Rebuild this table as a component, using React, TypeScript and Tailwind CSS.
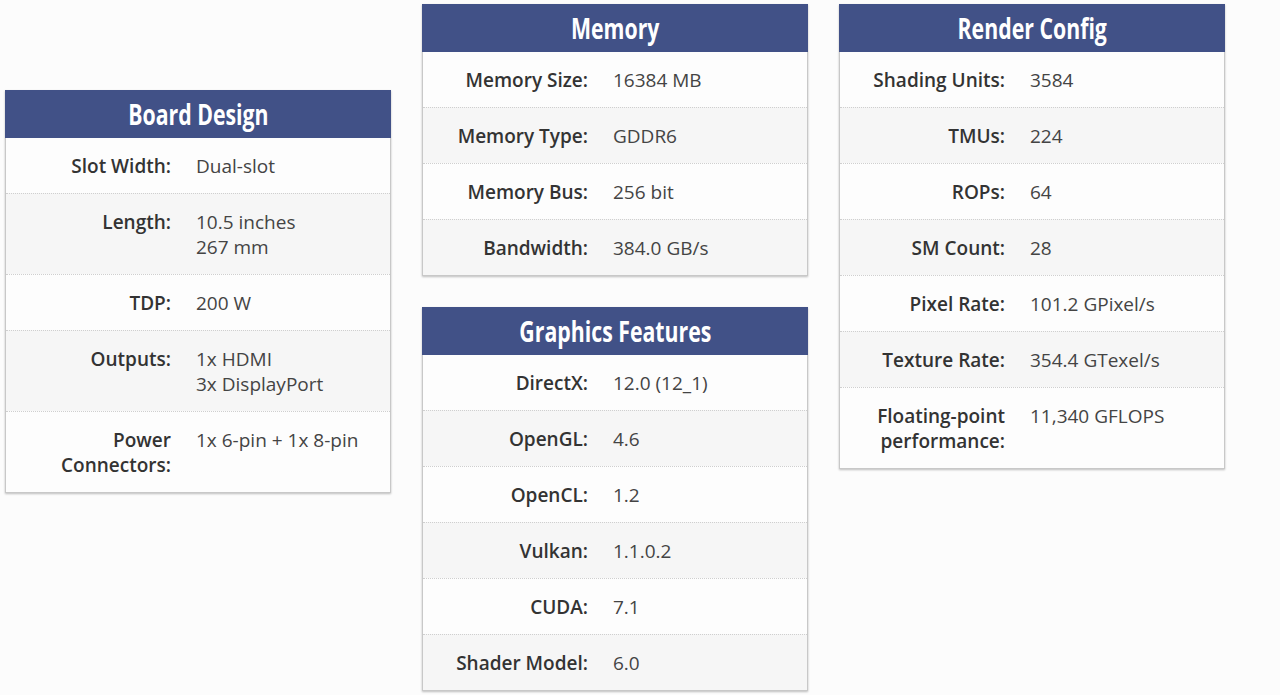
type Row = { label: string[]; value: string[] };

const boardDesign: Row[] = [
  { label: ["Slot Width:"], value: ["Dual-slot"] },
  { label: ["Length:"], value: ["10.5 inches", "267 mm"] },
  { label: ["TDP:"], value: ["200 W"] },
  { label: ["Outputs:"], value: ["1x HDMI", "3x DisplayPort"] },
  { label: ["Power", "Connectors:"], value: ["1x 6-pin + 1x 8-pin"] },
];

const memory: Row[] = [
  { label: ["Memory Size:"], value: ["16384 MB"] },
  { label: ["Memory Type:"], value: ["GDDR6"] },
  { label: ["Memory Bus:"], value: ["256 bit"] },
  { label: ["Bandwidth:"], value: ["384.0 GB/s"] },
];

const graphics: Row[] = [
  { label: ["DirectX:"], value: ["12.0 (12_1)"] },
  { label: ["OpenGL:"], value: ["4.6"] },
  { label: ["OpenCL:"], value: ["1.2"] },
  { label: ["Vulkan:"], value: ["1.1.0.2"] },
  { label: ["CUDA:"], value: ["7.1"] },
  { label: ["Shader Model:"], value: ["6.0"] },
];

const render: Row[] = [
  { label: ["Shading Units:"], value: ["3584"] },
  { label: ["TMUs:"], value: ["224"] },
  { label: ["ROPs:"], value: ["64"] },
  { label: ["SM Count:"], value: ["28"] },
  { label: ["Pixel Rate:"], value: ["101.2 GPixel/s"] },
  { label: ["Texture Rate:"], value: ["354.4 GTexel/s"] },
  { label: ["Floating-point", "performance:"], value: ["11,340 GFLOPS"] },
];

function Card({ title, rows }: { title: string; rows: Row[] }) {
  return (
    <section className="w-[386px] bg-white shadow-[0_1px_2px_rgba(0,0,0,0.25)]">
      <h2 className="flex h-12 items-center justify-center bg-[#415187] text-[28px] font-bold text-white">
        <span className="inline-block scale-x-[0.76] whitespace-nowrap">{title}</span>
      </h2>
      <div className="border-x border-b border-[#c8c8c8]">
        {rows.map((row, i) => (
          <div
            key={i}
            className={`grid grid-cols-[165px_1fr] gap-x-[25px] pt-[16px] pb-[14px] text-[19px] leading-[25px] ${
              i % 2 === 1 ? "bg-[#f6f6f6]" : "bg-[#fdfdfd]"
            } ${i > 0 ? "border-t border-dotted border-[#cfcfcf]" : ""}`}
          >
            <div className="text-right font-semibold text-[#333]">
              {row.label.map((l) => (
                <div key={l}>{l}</div>
              ))}
            </div>
            <div className="text-[#444]">
              {row.value.map((v) => (
                <div key={v}>{v}</div>
              ))}
            </div>
          </div>
        ))}
      </div>
    </section>
  );
}

export default function App() {
  return (
    <main className="flex h-[695px] gap-[31px] overflow-hidden bg-[#fcfcfc] px-[5px] font-['Open_Sans',sans-serif]">
      <div className="pt-[90px]">
        <Card title="Board Design" rows={boardDesign} />
      </div>
      <div className="flex flex-col gap-[31px] pt-[4px]">
        <Card title="Memory" rows={memory} />
        <Card title="Graphics Features" rows={graphics} />
      </div>
      <div className="pt-[4px]">
        <Card title="Render Config" rows={render} />
      </div>
    </main>
  );
}
